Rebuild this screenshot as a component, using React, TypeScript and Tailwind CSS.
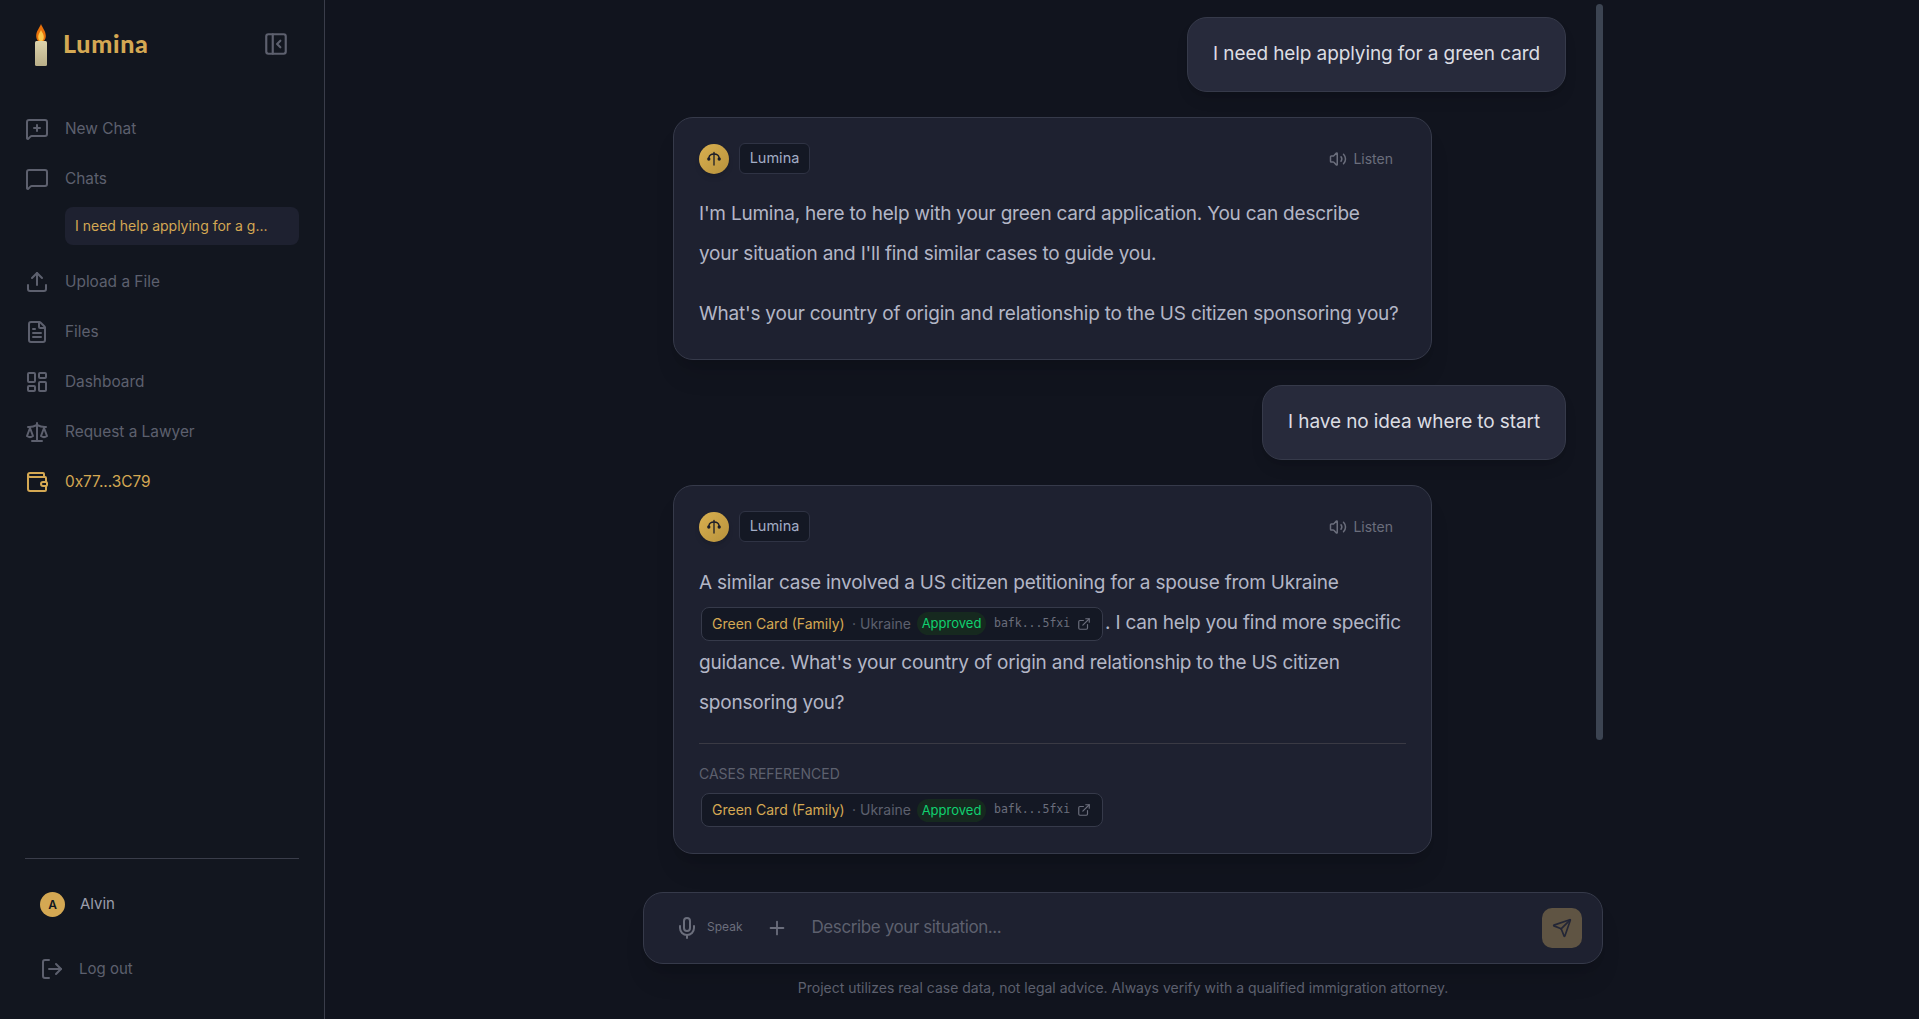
import {
  ExternalLink,
  FileText,
  LayoutDashboard,
  LogOut,
  MessageSquare,
  MessageSquarePlus,
  Mic,
  PanelLeftClose,
  Plus,
  Scale,
  Send,
  Upload,
  Volume2,
  Wallet,
} from 'lucide-react';
import type { ReactNode } from 'react';

function Candle() {
  return (
    <svg width="16" height="42" viewBox="0 0 16 42" fill="none">
      <defs>
        <linearGradient id="wax" x1="0" y1="0" x2="0" y2="1">
          <stop offset="0" stopColor="#dcd3ac" />
          <stop offset="1" stopColor="#b9ae88" />
        </linearGradient>
      </defs>
      <path d="M8 0C9.5 4 12.8 7 12.8 12C12.8 15.5 10.5 18.5 8 18.5C5.5 18.5 3.2 15.5 3.2 12C3.2 7 6.5 4 8 0Z" fill="#e8710a" />
      <path d="M8 6C9 8.5 10.8 10 10.8 13C10.8 15.5 9.5 17.5 8 17.5C6.5 17.5 5.2 15.5 5.2 13C5.2 10 7 8.5 8 6Z" fill="#fcc84a" />
      <rect x="2" y="17" width="12" height="25" rx="1.5" fill="url(#wax)" />
    </svg>
  );
}

function NavItem({ icon, label, gold }: { icon: ReactNode; label: string; gold?: boolean }) {
  return (
    <div className={`flex h-[50px] items-center gap-4 ${gold ? 'text-[#d4a853]' : 'text-[#5d606e]'}`}>
      {icon}
      <span className="text-[15.4px]">{label}</span>
    </div>
  );
}

function CaseChip() {
  return (
    <span className="mx-[2px] inline-flex h-[34px] w-[402px] items-center whitespace-nowrap rounded-lg border border-[#363a4a] bg-[#141824] pl-[10px] align-middle text-[14px] leading-none tracking-normal">
      <span className="w-[132px] shrink-0 text-[#d4a853]">Green Card (Family)</span>
      <span className="ml-[8px] w-[57px] shrink-0 text-[#5d606e]">· Ukraine</span>
      <span className="ml-[8px] w-[69px] shrink-0 rounded-full bg-[#16291f] py-[5px] text-center text-[13px] text-[#10d070]">Approved</span>
      <span className="ml-[8px] w-[76px] shrink-0 font-['DejaVu_Sans_Mono',monospace] text-[11.5px] text-[#6b6e7c]">bafk...5fxi</span>
      <ExternalLink size={14} className="ml-[7px] shrink-0 text-[#6b6e7c]" />
    </span>
  );
}

function AiHeader() {
  return (
    <div className="flex items-center justify-between leading-none tracking-normal">
      <div className="flex items-center gap-[10px]">
        <div className="flex h-[30px] w-[30px] items-center justify-center rounded-full bg-gradient-to-br from-[#d9b050] to-[#b8923c] shadow-md">
          <svg width="16" height="18" viewBox="0 0 16 18" fill="none" stroke="#1a1c28" strokeWidth="1.3" strokeLinecap="round">
            <path d="M8 2.5V15" />
            <path d="M2.8 8C3.2 5.2 5.2 4 8 4C10.8 4 12.8 5.2 13.2 8" />
            <circle cx="2.8" cy="9" r="1" fill="#1a1c28" />
            <circle cx="13.2" cy="9" r="1" fill="#1a1c28" />
          </svg>
        </div>
        <div className="flex h-[31px] w-[71px] items-center justify-center rounded-md border border-[#2f3344] bg-[#141824] text-[14.5px] text-[#a3adc6]">
          Lumina
        </div>
      </div>
      <div className="mr-[13px] flex items-center gap-[6px] text-[14px] text-[#6b6e7c]">
        <Volume2 size={18} />
        Listen
      </div>
    </div>
  );
}

function UserBubble({ children }: { children: ReactNode }) {
  return (
    <div className="flex justify-end pr-[37px]">
      <div className="flex h-[75px] items-center rounded-[20px] border border-[#363a4a] bg-[#272a3b] px-[25px] text-[19px] tracking-[-0.1px] text-[#dcdde3] shadow-lg">
        {children}
      </div>
    </div>
  );
}

export default function App() {
  return (
    <div className="flex h-screen w-full overflow-hidden bg-[#11141e] font-['Inter',sans-serif]">
      <aside className="flex w-[325px] shrink-0 flex-col border-r border-[#3a3d4a] bg-[#12161f] px-[25px]">
        <div className="flex h-[104px] items-start justify-between pl-[8px] pr-[10px] pt-[24px]">
          <div className="flex items-start gap-[14px]">
            <Candle />
            <span className="mt-[3px] font-['Lato',sans-serif] text-[25px] leading-8 font-black tracking-[0.7px] text-[#d4a853]">Lumina</span>
          </div>
          <PanelLeftClose size={26} className="mt-[7px] text-[#5d606e]" />
        </div>
        <NavItem icon={<MessageSquarePlus size={24} />} label="New Chat" />
        <NavItem icon={<MessageSquare size={24} />} label="Chats" />
        <div className="ml-[40px] mt-[3px] flex h-[38px] items-center rounded-lg bg-[#1e2130] px-[10px] pb-[2px] text-[14px] text-[#d4a853]">
          I need help applying for a g...
        </div>
        <div className="mt-[12px]">
          <NavItem icon={<Upload size={24} />} label="Upload a File" />
          <NavItem icon={<FileText size={24} />} label="Files" />
          <NavItem icon={<LayoutDashboard size={24} />} label="Dashboard" />
          <NavItem icon={<Scale size={24} />} label="Request a Lawyer" />
          <NavItem icon={<Wallet size={24} />} label="0x77...3C79" gold />
        </div>
        <div className="mt-auto border-t border-[#3a3d4a] pb-[38px] pl-[15px]">
          <div className="mt-[33px] flex items-center gap-[15px]">
            <div className="flex h-[25px] w-[25px] items-center justify-center rounded-full bg-[#d4a853] text-[12px] font-semibold text-[#12161f]">A</div>
            <span className="text-[15px] text-[#9a9dab]">Alvin</span>
          </div>
          <div className="mt-[40px] flex items-center gap-[15px] text-[#5d606e]">
            <LogOut size={24} />
            <span className="text-[15px]">Log out</span>
          </div>
        </div>
      </aside>
      <main className="flex min-w-0 flex-1 flex-col items-center pl-[2px]">
        <div className="relative w-[960px] flex-1 pt-[17px]">
          <div className="absolute right-0 top-[4px] h-[736px] w-[7px] rounded-full bg-[#3c4452]" />
          <UserBubble>I need help applying for a green card</UserBubble>
          <div className="mt-[25px] ml-[30px] w-[759px] rounded-[20px] border border-[#363a4a] bg-[#1e2130] px-[25px] pt-[25px] pb-[25px] text-[19px] leading-10 tracking-[-0.22px] text-[#b3b6c6] shadow-xl">
            <AiHeader />
            <p className="mt-[20px]">
              I'm Lumina, here to help with your green card application. You can describe
              <br />
              your situation and I'll find similar cases to guide you.
            </p>
            <p className="mt-5">What's your country of origin and relationship to the US citizen sponsoring you?</p>
          </div>
          <div className="mt-[25px]">
            <UserBubble>I have no idea where to start</UserBubble>
          </div>
          <div className="mt-[25px] ml-[30px] w-[759px] rounded-[20px] border border-[#363a4a] bg-[#1e2130] px-[25px] pt-[25px] pb-[26px] text-[19px] leading-10 tracking-[-0.22px] text-[#b3b6c6] shadow-xl">
            <AiHeader />
            <p className="mt-[21px]">
              A similar case involved a US citizen petitioning for a spouse from Ukraine <CaseChip />. I can help you find more specific guidance. What's your country of origin and relationship to the US citizen sponsoring you?
            </p>
            <div className="mt-[20px] border-t border-[#3a3a44] pt-[20px]">
              <div className="text-[14px] leading-5 tracking-normal text-[#5d606e]">CASES REFERENCED</div>
              <div className="mt-[9px] leading-none">
                <CaseChip />
              </div>
            </div>
          </div>
        </div>
        <div className="w-[960px] pb-[21px]">
          <div className="flex h-[72px] items-center rounded-[20px] border border-[#363a4a] bg-[#1e2130] pl-[31px] pr-[20px] shadow-xl">
            <Mic size={24} className="text-[#6b6e7c]" />
            <span className="ml-[8px] mb-[2px] text-[12px] text-[#6b6e7c]">Speak</span>
            <Plus size={22} className="ml-[24px] text-[#6b6e7c]" />
            <span className="ml-[23px] flex-1 text-[17px] tracking-[-0.4px] text-[#5d606e]">Describe your situation...</span>
            <div className="flex h-10 w-10 items-center justify-center rounded-[10px] bg-[#5f5443]">
              <Send size={20} className="text-[#232636]" />
            </div>
          </div>
          <p className="mt-[14px] text-center text-[14px] leading-5 text-[#5d606e]">
            Project utilizes real case data, not legal advice. Always verify with a qualified immigration attorney.
          </p>
        </div>
      </main>
    </div>
  );
}
